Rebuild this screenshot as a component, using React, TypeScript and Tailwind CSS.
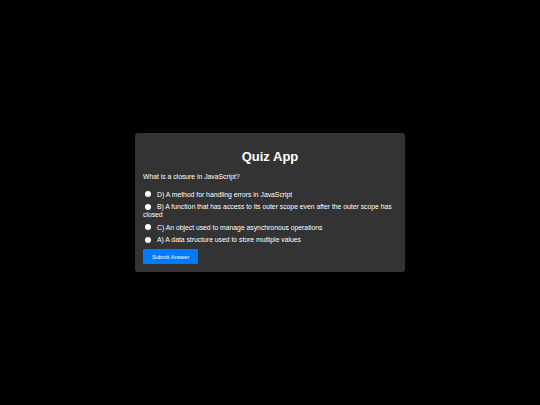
const OPTIONS = [
  "D) A method for handling errors in JavaScript",
  "B) A function that has access to its outer scope even after the outer scope has closed",
  "C) An object used to manage asynchronous operations",
  "A) A data structure used to store multiple values",
];

export default function App() {
  return (
    <div className="w-[540px] h-[405px] bg-black flex items-center justify-center font-['Liberation_Sans',Arial,sans-serif] text-white">
      <div className="w-[270px] bg-[#333333] rounded-[3px] p-2">
        <h1 className="text-[13px] leading-[15px] font-bold text-center mt-2 mb-[9px]">Quiz App</h1>
        <p className="text-[6.8px] leading-[8px] mb-[10px]">What is a closure in JavaScript?</p>
        <div>
          {OPTIONS.map((o) => (
            <div key={o} className="text-[6.8px] leading-[8px] mb-[4.5px]">
              <span className="inline-block w-[6px] h-[6px] rounded-full bg-white ml-[2px] mr-[6px] align-[-0.5px]" />
              {o}
            </div>
          ))}
        </div>
        <button className="block mt-[5px] h-[15px] px-[9px] bg-[#007bff] text-white text-[5.6px] rounded-[1px]">
          Submit Answer
        </button>
      </div>
    </div>
  );
}
